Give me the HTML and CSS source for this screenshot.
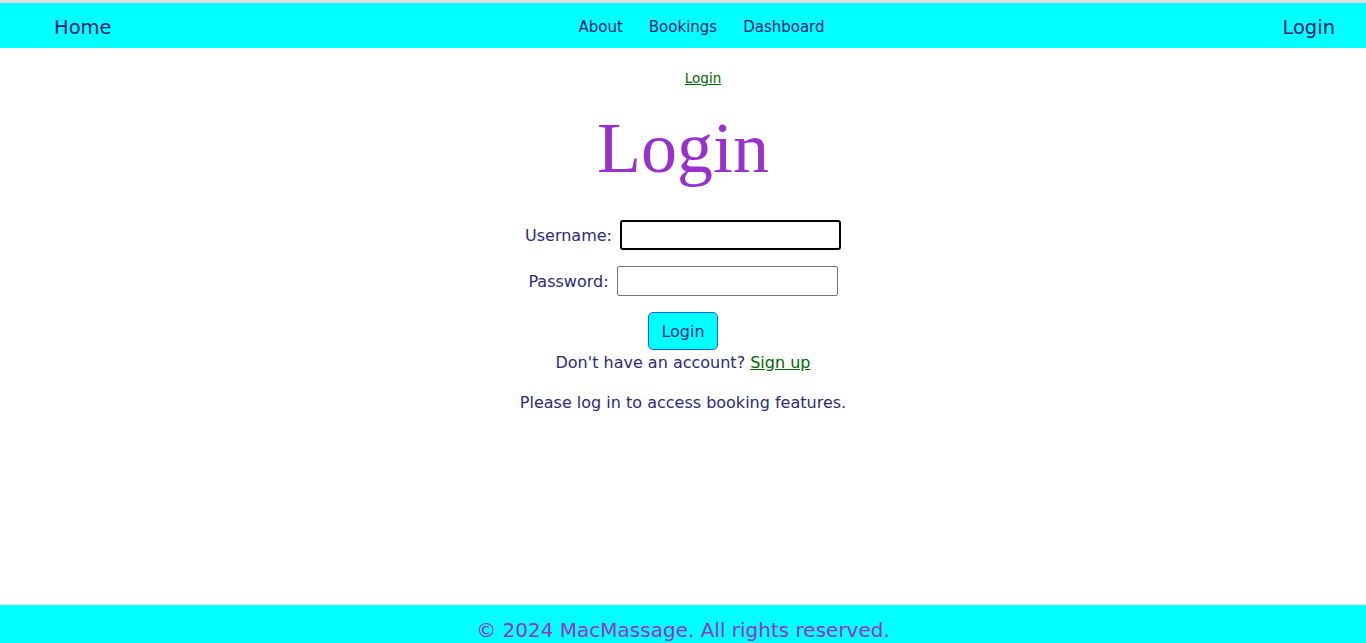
FILE: index.html
```html
<!DOCTYPE html>
<html lang="en">
<head>
<meta charset="utf-8">
<title>Login - MacMassage</title>
<link rel="stylesheet" href="styles.css">
</head>
<body>
<div class="page">
  <header class="topbar">
    <a class="brand" href="#">Home</a>
    <nav class="nav">
      <a href="#">About</a>
      <a href="#">Bookings</a>
      <a href="#">Dashboard</a>
    </nav>
    <a class="account" href="#">Login</a>
  </header>
  <main class="content">
    <div class="crumb"><a href="#">Login</a></div>
    <h1 class="title">Login</h1>
    <form class="form">
      <div class="row">
        <label for="u">Username:</label>
        <input id="u" class="field focused" type="text" autofocus>
      </div>
      <div class="row">
        <label for="p">Password:</label>
        <input id="p" class="field" type="password">
      </div>
      <button type="button" class="btn">Login</button>
    </form>
    <p class="signup">Don't have an account? <a href="#">Sign up</a></p>
    <p class="note">Please log in to access booking features.</p>
  </main>
  <footer class="footer">© 2024 MacMassage. All rights reserved.</footer>
</div>
</body>
</html>
```
FILE: styles.css
```css
html, body {
  margin: 0;
  padding: 0;
}
body {
  font-family: "DejaVu Sans", Verdana, sans-serif;
  color: #2b2b77;
  background: #fff;
}
.page {
  display: flex;
  flex-direction: column;
  min-height: 100vh;
}
.topbar {
  border-top: 3px solid #dcdcdc;
  background: #00ffff;
  height: 42px;
  display: flex;
  align-items: center;
  justify-content: space-between;
  padding: 3px 31px 0 54px;
}
.topbar a {
  color: #1c1c6e;
  text-decoration: none;
}
.brand, .account {
  font-size: 19.5px;
}
.brand {
  width: 134px;
}
.account {
  width: 120px;
  text-align: right;
}
.nav {
  display: flex;
  gap: 26px;
  font-size: 15px;
}
.content {
  flex: 1;
  display: flex;
  flex-direction: column;
  align-items: center;
}
.crumb {
  margin-top: 22px;
  font-size: 13.5px;
  padding-left: 40px;
}
.crumb a, .signup a {
  color: #006400;
}
.title {
  font-family: "Liberation Serif", "Times New Roman", serif;
  font-weight: normal;
  font-size: 72px;
  color: #9932cc;
  margin: 26px 0 36px;
  line-height: 1;
}
.form {
  display: flex;
  flex-direction: column;
  align-items: center;
}
.row {
  display: flex;
  align-items: center;
  gap: 8px;
  font-size: 16px;
  margin-bottom: 16px;
}
.field {
  box-sizing: border-box;
  width: 221px;
  height: 30px;
  border: 1px solid #767676;
  border-radius: 2px;
  font-size: 15px;
  padding: 2px 3px;
  background: #fff;
}
.field.focused {
  border: 2px solid #000;
  border-radius: 3px;
  outline: none;
}
.btn {
  margin-top: 0;
  width: 70px;
  height: 38px;
  background: #00ffff;
  border: 1px solid #1e63e6;
  border-radius: 5px;
  font-family: "DejaVu Sans", Verdana, sans-serif;
  font-size: 16px;
  color: #2b2b77;
}
.signup {
  margin: 3px 0 0;
  font-size: 16px;
}
.note {
  margin: 21px 0 0;
  font-size: 16px;
}
.footer {
  background: #00ffff;
  height: 38px;
  box-sizing: border-box;
  padding-top: 14px;
  text-align: center;
  color: #9932cc;
  font-size: 20px;
  line-height: 22px;
}
```
